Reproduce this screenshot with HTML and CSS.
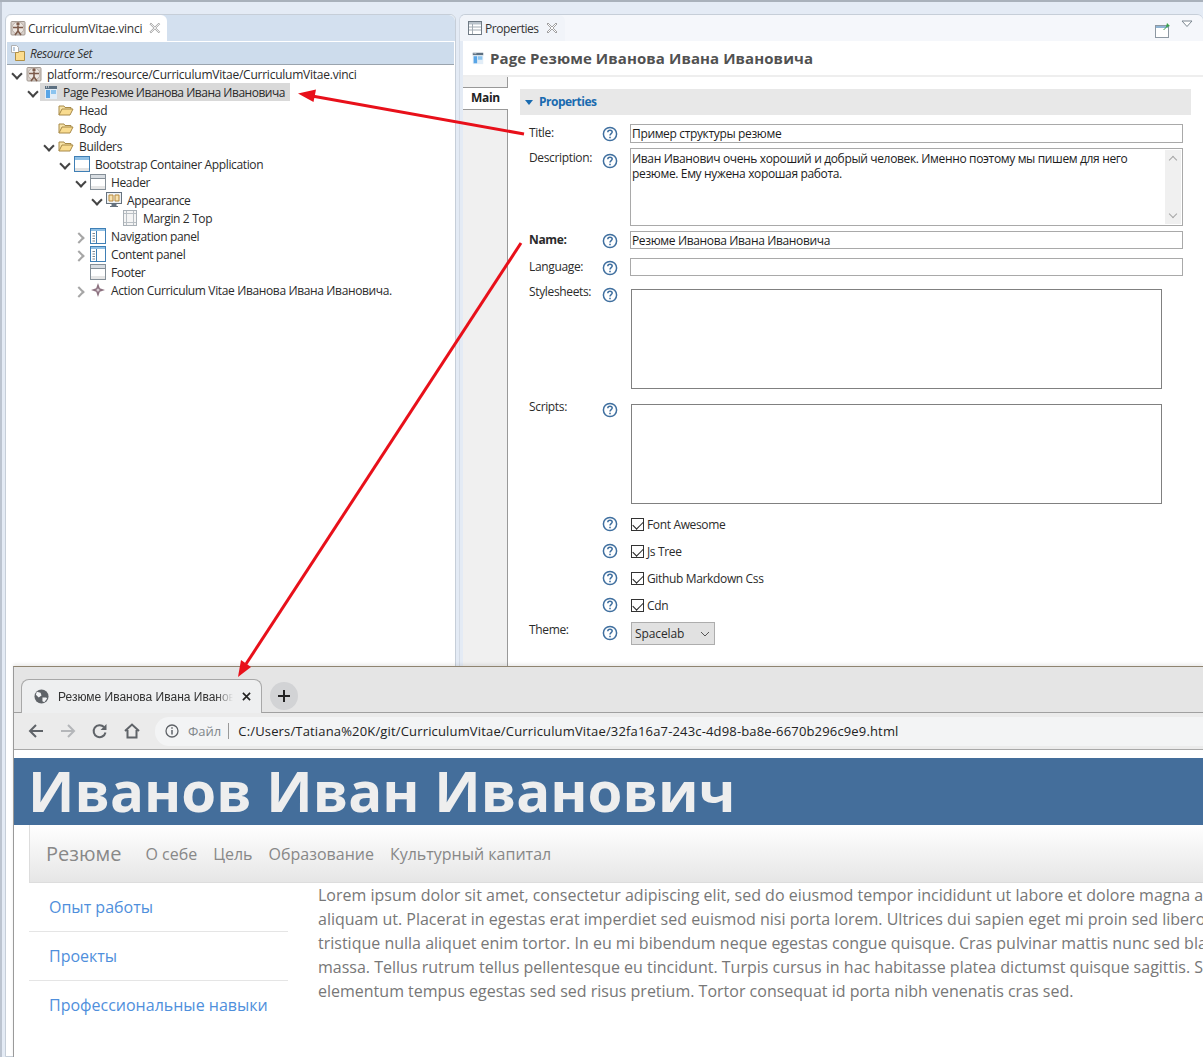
FILE: index.html
```html
<!doctype html>
<html>
<head>
<meta charset="utf-8" />
<title>Curriculum Vitae</title>
<link rel="stylesheet" href="styles.css">
</head>
<body>
<svg class="defs" width="0" height="0">
  <defs>
    <symbol id="i-vinci" viewBox="0 0 16 16">
      <rect x="1" y="1.500" width="14" height="13.500" rx="1" fill="#d8d0ca" stroke="#a39a93"/>
      <circle cx="8" cy="8" r="6" fill="#ece7e2" stroke="#b9aea6"/>
      <circle cx="8" cy="4" r="1.700" fill="#7c5a4a"/>
      <path d="M8 6v5M3 7.500h10M8 11l-3 4M8 11l3 4" stroke="#7c5a4a" stroke-width="1.600" fill="none"/>
    </symbol>
    <symbol id="i-folder" viewBox="0 0 16 16">
      <path d="M1 13V4h5l1 1.500h6V7" fill="#f8e4a8" stroke="#a88a48"/>
      <path d="M1 13l3-6h11l-3 6z" fill="#f9dc90" stroke="#a88a48"/>
    </symbol>
    <symbol id="i-set" viewBox="0 0 16 16">
      <path d="M1.500 .5h5l2 2v5h-7z" fill="#fff" stroke="#b0b0b0"/>
      <path d="M5.500 7.500h3l1-1h5v9h-9z" fill="#fbdc8e" stroke="#b08f44"/>
      <path d="M3 3h2M3 5h2" stroke="#7a9cc0"/>
    </symbol>
    <symbol id="i-page" viewBox="0 0 16 16">
      <path d="M2 2h12v3H2z" fill="#5c6f80"/>
      <path d="M2 5h12v10H2z" fill="#e2edf7"/>
      <path d="M3 6h4v8H3z" fill="#58a5e6"/>
      <path d="M8 6h5v4H8z" fill="#8cc4ef"/>
      <path d="M3 3h1M5 3h1" stroke="#fff"/>
    </symbol>
    <symbol id="i-app" viewBox="0 0 16 16">
      <rect x=".5" y=".5" width="15" height="15" fill="#fff" stroke="#3f7fb5"/>
      <path d="M1 1h14v3H1z" fill="#8fc0e6"/>
      <path d="M1 12h14v3H1z" fill="#e3e3e3"/>
    </symbol>
    <symbol id="i-header" viewBox="0 0 16 16">
      <rect x=".5" y=".5" width="15" height="15" fill="#fff" stroke="#858f98"/>
      <path d="M1 1h14v3H1z" fill="#d8dde2"/>
      <path d="M1 4.500h14" stroke="#858f98"/>
      <path d="M1 12h14v3H1z" fill="#e6e6e6"/>
    </symbol>
    <symbol id="i-look" viewBox="0 0 16 16">
      <rect x=".5" y=".5" width="15" height="11" fill="#eef1f4" stroke="#66727e"/>
      <path d="M3 3h4v6H3zM9 3h4v6H9z" fill="#f7e2b0" stroke="#b98a3c"/>
      <path d="M6 12h4v2H6zM4 14.500h8" fill="#66727e" stroke="#66727e"/>
    </symbol>
    <symbol id="i-margin" viewBox="0 0 16 16">
      <rect x="1.500" y=".5" width="13" height="15" fill="#f4f4f4" stroke="#a9b0b6"/>
      <path d="M4.500 1v14M11.500 1v14M2 3.500h12M2 12.500h12" stroke="#b9bfc4"/>
    </symbol>
    <symbol id="i-panel" viewBox="0 0 16 16">
      <rect x=".5" y=".5" width="15" height="15" fill="#fff" stroke="#3f7fb5"/>
      <path d="M1 1h14v2H1z" fill="#8fc0e6"/>
      <path d="M6.500 3v12" stroke="#3f7fb5"/>
      <path d="M2.500 5.500h2.500M2.500 8h2.500M2.500 10.500h2.500M2.500 13h2.500" stroke="#7d8790"/>
    </symbol>
    <symbol id="i-action" viewBox="0 0 16 16">
      <path d="M8 1l1.800 5.200L15 8l-5.200 1.800L8 15l-1.800-5.200L1 8l5.200-1.800z" fill="#8d7280"/>
      <circle cx="8" cy="8" r="1.500" fill="#d9ccd3"/>
    </symbol>
    <symbol id="i-help" viewBox="0 0 16 16">
      <circle cx="8" cy="8" r="6.600" fill="#fff" stroke="#3f6f9f" stroke-width="1.500"/>
      <path d="M5.800 6.200C5.800 4.800 6.800 4.200 8 4.200s2.200.7 2.200 1.900c0 1.500-2.200 1.600-2.200 3.300" fill="none" stroke="#3f6f9f" stroke-width="1.500"/>
      <path d="M7.200 10.800h1.600v1.500H7.200z" fill="#3f6f9f"/>
    </symbol>
    <symbol id="i-close" viewBox="0 0 12 12">
      <path d="M2 1l4 4 4-4 1 1-4 4 4 4-1 1-4-4-4 4-1-1 4-4-4-4z" fill="#fff" stroke="#8a8a8a" stroke-width=".8"/>
    </symbol>
  </defs>
</svg>

<div class="desktop">
  <!-- Редактор слева -->
  <section class="pane pane-left">
    <div class="tabstrip strip-blue">
      <div class="ptab ptab-left">
        <svg class="ico"><use href="#i-vinci"/></svg>
        <span class="tight">CurriculumVitae.vinci</span>
        <svg class="tab-x"><use href="#i-close"/></svg>
      </div>
    </div>
    <div class="resbar">
      <svg class="ico"><use href="#i-set"/></svg>
      <em>Resource Set</em>
    </div>
    <ul class="tree">
      <li class="row l0"><span class="tw open"></span><svg class="ico"><use href="#i-vinci"/></svg><span class="lbl">platform:/resource/CurriculumVitae/CurriculumVitae.vinci</span></li>
      <li class="row l1"><span class="tw open"></span><span class="sel"><svg class="ico"><use href="#i-page"/></svg><span class="lbl">Page Резюме Иванова Ивана Ивановича</span></span></li>
      <li class="row l2"><span class="tw"></span><svg class="ico"><use href="#i-folder"/></svg><span class="lbl">Head</span></li>
      <li class="row l2"><span class="tw"></span><svg class="ico"><use href="#i-folder"/></svg><span class="lbl">Body</span></li>
      <li class="row l2"><span class="tw open"></span><svg class="ico"><use href="#i-folder"/></svg><span class="lbl">Builders</span></li>
      <li class="row l3"><span class="tw open"></span><svg class="ico"><use href="#i-app"/></svg><span class="lbl">Bootstrap Container Application</span></li>
      <li class="row l4"><span class="tw open"></span><svg class="ico"><use href="#i-header"/></svg><span class="lbl">Header</span></li>
      <li class="row l5"><span class="tw open"></span><svg class="ico"><use href="#i-look"/></svg><span class="lbl">Appearance</span></li>
      <li class="row l6"><span class="tw"></span><svg class="ico"><use href="#i-margin"/></svg><span class="lbl">Margin 2 Top</span></li>
      <li class="row l4"><span class="tw shut"></span><svg class="ico"><use href="#i-panel"/></svg><span class="lbl">Navigation panel</span></li>
      <li class="row l4"><span class="tw shut"></span><svg class="ico"><use href="#i-panel"/></svg><span class="lbl">Content panel</span></li>
      <li class="row l4"><span class="tw"></span><svg class="ico"><use href="#i-header"/></svg><span class="lbl">Footer</span></li>
      <li class="row l4"><span class="tw shut"></span><svg class="ico"><use href="#i-action"/></svg><span class="lbl">Action Curriculum Vitae Иванова Ивана Ивановича.</span></li>
    </ul>
  </section>

  <!-- Свойства справа -->
  <section class="pane pane-right">
    <div class="tabstrip strip-light">
      <div class="ptab ptab-right">
        <svg class="ico" viewBox="0 0 16 16"><rect x="1.500" y="1.500" width="13" height="13" fill="#fff" stroke="#6f7a84"/><path d="M2 2h12v2.500H2z" fill="#b9c2ca"/><path d="M5.500 4v10M2 7h12M2 10h12" stroke="#a3acb4"/></svg>
        <span class="tight">Properties</span>
        <svg class="tab-x"><use href="#i-close"/></svg>
      </div>
      <div class="view-tools">
        <svg class="pin" viewBox="0 0 18 18"><rect x="1.500" y="4.500" width="13" height="12" fill="#fff" stroke="#8d98a2"/><path d="M2 5h12v2H2z" fill="#8fb4d4"/><path d="M9 9l3-3 1-4 3 3-3 1-3 3z" fill="#3aa14a"/></svg>
        <svg class="menu-arrow" viewBox="0 0 12 8"><path d="M1 1h10L6 6.500z" fill="#fff" stroke="#7c8791"/></svg>
      </div>
    </div>
    <h2 class="form-title"><svg class="ico"><use href="#i-page"/></svg>Page Резюме Иванова Ивана Ивановича</h2>
    <div class="prop-body">
      <div class="side-tabs"><div class="side-tab">Main</div></div>
      <div class="sheet">
        <div class="section-bar"><span class="twist"></span><span class="section-name">Properties</span></div>
        <div class="field h20 first">
          <label>Title:</label><svg class="help"><use href="#i-help"/></svg>
          <div class="input wide">Пример структуры резюме</div>
        </div>
        <div class="field h79">
          <label>Description:</label><svg class="help"><use href="#i-help"/></svg>
          <div class="input wide multi">Иван Иванович очень хороший и добрый человек. Именно поэтому мы пишем для него резюме. Ему нужена хорошая работа.
            <div class="vscroll"><i class="up"></i><i class="down"></i></div>
          </div>
        </div>
        <div class="field h19 g5">
          <label class="req">Name:</label><svg class="help"><use href="#i-help"/></svg>
          <div class="input wide">Резюме Иванова Ивана Ивановича</div>
        </div>
        <div class="field h19 g8">
          <label>Language:</label><svg class="help"><use href="#i-help"/></svg>
          <div class="input wide"></div>
        </div>
        <div class="field h100 g13">
          <label>Stylesheets:</label><svg class="help"><use href="#i-help"/></svg>
          <div class="listbox"></div>
        </div>
        <div class="field h100 g15">
          <label>Scripts:</label><svg class="help"><use href="#i-help"/></svg>
          <div class="listbox"></div>
        </div>
        <div class="field check g14"><label></label><svg class="help"><use href="#i-help"/></svg><span class="cb"></span>Font Awesome</div>
        <div class="field check"><label></label><svg class="help"><use href="#i-help"/></svg><span class="cb"></span>Js Tree</div>
        <div class="field check"><label></label><svg class="help"><use href="#i-help"/></svg><span class="cb"></span>Github Markdown Css</div>
        <div class="field check"><label></label><svg class="help"><use href="#i-help"/></svg><span class="cb"></span>Cdn</div>
        <div class="field theme">
          <label>Theme:</label><svg class="help"><use href="#i-help"/></svg>
          <div class="select">Spacelab<svg class="sel-arrow" viewBox="0 0 10 6"><path d="M1 1l4 4 4-4" fill="none" stroke="#555"/></svg></div>
        </div>
      </div>
    </div>
  </section>
</div>

<!-- Окно браузера поверх Eclipse -->
<div class="browser">
  <div class="chrome-tabs">
    <div class="ctab">
      <svg class="globe" viewBox="0 0 16 16"><circle cx="8" cy="8" r="7.500" fill="#5f6368"/><path d="M3 3l4 1 1 3-3 2-3-3zM9 9l4 0 1 1-3 4-2-1z" fill="#f2f3f5"/></svg>
      <span class="ctab-title">Резюме Иванова Ивана Иванов</span>
      <svg class="ctab-x" viewBox="0 0 10 10"><path d="M1 1l8 8M9 1l-8 8" stroke="#222" stroke-width="1.800"/></svg>
    </div>
    <div class="newtab"><svg viewBox="0 0 12 12"><path d="M6 0v12M0 6h12" stroke="#222" stroke-width="2"/></svg></div>
  </div>
  <div class="toolbar">
    <svg class="nav" viewBox="0 0 16 16"><path d="M15 8H2M8 2L2 8l6 6" fill="none" stroke="#5f6368" stroke-width="2"/></svg>
    <svg class="nav" viewBox="0 0 16 16"><path d="M1 8h13M8 2l6 6-6 6" fill="none" stroke="#b4b6b9" stroke-width="2"/></svg>
    <svg class="nav" viewBox="0 0 16 16"><path d="M13.500 9.500A6 6 0 1 1 12 4" fill="none" stroke="#5f6368" stroke-width="2"/><path d="M14.500 1v6h-6z" fill="#5f6368"/></svg>
    <svg class="nav" viewBox="0 0 16 16"><path d="M1 8l7-6.500L15 8M3.500 7v7.500h9V7" fill="none" stroke="#5f6368" stroke-width="2"/></svg>
    <div class="omnibox">
      <svg class="info" viewBox="0 0 14 14"><circle cx="7" cy="7" r="6" fill="none" stroke="#5f6368" stroke-width="1.300"/><path d="M7 6v4.500M7 3.300v1.500" stroke="#5f6368" stroke-width="1.500"/></svg>
      <span class="scheme">Файл</span>
      <span class="url">C:/Users/Tatiana%20K/git/CurriculumVitae/CurriculumVitae/32fa16a7-243c-4d98-ba8e-6670b296c9e9.html</span>
    </div>
  </div>
  <div class="viewport">
    <h1 class="jumbo">Иванов Иван Иванович</h1>
    <nav class="navbar">
      <a class="brand">Резюме</a>
      <a>О себе</a><a>Цель</a><a>Образование</a><a>Культурный капитал</a>
    </nav>
    <div class="content">
      <ul class="sidenav">
        <li>Опыт работы</li>
        <li>Проекты</li>
        <li>Профессиональные навыки</li>
      </ul>
      <p class="lorem">Lorem ipsum dolor sit amet, consectetur adipiscing elit, sed do eiusmod tempor incididunt ut labore et dolore magna a<br>aliquam ut. Placerat in egestas erat imperdiet sed euismod nisi porta lorem. Ultrices dui sapien eget mi proin sed libero<br>tristique nulla aliquet enim tortor. In eu mi bibendum neque egestas congue quisque. Cras pulvinar mattis nunc sed bla<br>massa. Tellus rutrum tellus pellentesque eu tincidunt. Turpis cursus in hac habitasse platea dictumst quisque sagittis. S<br>elementum tempus egestas sed sed risus pretium. Tortor consequat id porta nibh venenatis cras sed.</p>
    </div>
  </div>
</div>

<!-- Красные стрелки -->
<svg class="arrows" viewBox="0 0 1203 1057" width="1203" height="1057">
  <path d="M524 134L312 96" stroke="#e8101a" stroke-width="3" fill="none"/>
  <path d="M298 93.500L316 89.500L313.500 102z" fill="#e8101a"/>
  <path d="M521 243L246 664" stroke="#e8101a" stroke-width="3" fill="none"/>
  <path d="M238 677L241 660L251 667z" fill="#e8101a"/>
</svg>
</body>
</html>
```
FILE: styles.css
```css
* { box-sizing: border-box; }
html, body { margin: 0; height: 100%; }
body { width: 1203px; height: 1057px; overflow: hidden; position: relative; background: #e4ebf5; font: 12px "Open Sans", "Noto Sans", sans-serif; color: #222; border-top: 2px solid #a9b1bb; }
.defs { position: absolute; }
ul { list-style: none; margin: 0; padding: 0; }

/* Eclipse */
.desktop { display: flex; height: 1055px; padding: 12px 0 0 5px; gap: 3px; box-shadow: inset 2px 0 0 #bcc4d0; }
.pane { background: #fff; border: 1px solid #c6ced8; border-radius: 6px 6px 0 0; height: 100%; }
.pane-left { width: 451px; }
.pane-right { flex: 1; border-right: 0; border-left-color: #d4dbe5; background: #e4ebf5; }
.ico { width: 16px; height: 16px; flex: none; }
.tabstrip { height: 26px; display: flex; align-items: flex-end; border-radius: 6px 6px 0 0; }
.strip-blue { background: #d3e0ef; }
.strip-light { background: #f5f7fb; justify-content: space-between; }
.ptab { height: 26px; display: flex; align-items: center; background: #fff; border-radius: 6px 6px 0 0; padding: 0 6px 0 4px; color: #333; }
.ptab-left { width: 161px; }
.ptab-right { width: 105px; background: #f1f4f9; padding-left: 7px; }
.ptab .tight { margin-left: 2px; font-size: 12px; letter-spacing: -.2px; white-space: nowrap; }
.ptab-right .tight { letter-spacing: -.45px; }
.tab-x { width: 12px; height: 12px; margin-left: 7px; }
.view-tools { display: flex; align-items: center; height: 26px; gap: 9px; padding: 0 10px 0 0; }
.pin { width: 18px; height: 18px; margin-top: 3px; }
.menu-arrow { width: 12px; height: 8px; margin-top: -8px; }
.resbar { margin: 1px 1px 0; height: 23px; background: #cddcec; border-bottom: 1px solid #9aa4ae; display: flex; align-items: center; gap: 4px; padding-left: 3px; letter-spacing: -.4px; color: #333; }

.row { height: 18px; display: flex; align-items: center; white-space: nowrap; letter-spacing: -.36px; color: #2b2b2b; }
.lbl { margin-left: 5px; }
.l0 { padding-left: 3px; letter-spacing: -.24px; }
.l1 { padding-left: 19px; }
.l2 { padding-left: 35px; }
.l3 { padding-left: 51px; }
.l4 { padding-left: 67px; }
.l5 { padding-left: 83px; }
.l6 { padding-left: 99px; }
.tw { width: 16px; height: 18px; flex: none; margin-right: 1px; position: relative; }
.tw.open::after, .tw.shut::after { content: ""; position: absolute; left: 4px; top: 5px; width: 6px; height: 6px; border-right: 2px solid #444; border-bottom: 2px solid #444; transform: rotate(45deg); }
.tw.shut::after { border-color: #a6a6a6; left: 2px; top: 7px; transform: rotate(-45deg); }
.sel { display: flex; align-items: center; height: 18px; background: #d9d9d9; width: 250px; margin-left: -2px; padding-left: 3px; letter-spacing: -.48px; }
.sel .lbl { margin-left: 4px; }

.form-title { margin: 0 0 0 3px; height: 36px; display: flex; align-items: center; gap: 5px; padding-left: 8px; font-size: 15px; font-weight: 700; color: #515151; background: #fff; border-bottom: 2px solid #eeeeee; white-space: nowrap; letter-spacing: .08px; }
.form-title .ico { width: 14px; height: 14px; }
.prop-body { display: flex; height: 900px; margin-left: 3px; background: #fff; }
.side-tabs { width: 45px; padding-top: 10px; background: #f0f0f0; border-right: 1px solid #999; }
.side-tab { height: 23px; width: 45px; background: #fff; font-weight: 700; line-height: 19px; padding-left: 8px; border-top: 1px solid #999; border-bottom: 1px solid #999; color: #222; letter-spacing: -.3px; }
.sheet { flex: 1; padding: 12px 0 0 12px; }
.section-bar { width: 671px; height: 26px; background: #e8e8e8; color: #1a6bb0; font-weight: 700; display: flex; align-items: center; padding: 0 0 2px 5px; letter-spacing: -.5px; }
.twist { width: 0; height: 0; border-left: 4px solid transparent; border-right: 4px solid transparent; border-top: 5px solid #1a6bb0; margin-right: 6px; margin-top: 2px; }

.field { display: flex; align-items: flex-start; padding-left: 9px; letter-spacing: -.35px; color: #2b2b2b; }
.field label { width: 73px; flex: none; line-height: 18px; }
.field label.req { font-weight: 700; }
.help { width: 16px; height: 16px; flex: none; margin-right: 12px; margin-top: 2px; }
.h20 { height: 19px; }
.h79 { height: 78px; margin-top: 5px; }
.h79 label { padding-top: 1px; }
.h79 .help { margin-top: 5px; }
.h19 { height: 18px; }
.h100 { height: 100px; }
.h100 label { margin-top: -6px; }
.h100 .help { margin-top: -2px; }
.first { margin-top: 9px; }
.g5 { margin-top: 5px; }
.g8 { margin-top: 9px; }
.g13 { margin-top: 13px; }
.g15 { margin-top: 15px; }
.g14 { margin-top: 7px; }
.input { width: 553px; border: 1px solid #a9a9a9; height: 100%; line-height: 17px; padding-left: 1px; color: #1c1c1c; white-space: nowrap; background: #fff; }
.multi { white-space: normal; line-height: 15px; padding: 2px 40px 0 1px; position: relative; }
.vscroll { position: absolute; right: 1px; top: 1px; bottom: 1px; width: 16px; background: #f0f0f0; }
.vscroll i { position: absolute; left: 5px; width: 6px; height: 6px; border-left: 1px solid #a6a6a6; border-top: 1px solid #a6a6a6; }
.vscroll .up { top: 7px; transform: rotate(45deg); }
.vscroll .down { bottom: 7px; transform: rotate(225deg); }
.listbox { width: 531px; height: 100px; margin-left: 1px; border: 1px solid #808080; background: #fff; }
.check { height: 27px; align-items: center; }
.check .help { margin-top: 0; margin-bottom: 1px; }
.check label { height: 18px; }
.cb { width: 13px; height: 13px; border: 1px solid #333; margin: 0 3px 0 1px; position: relative; flex: none; }
.cb::after { content: ""; position: absolute; left: 3px; top: 0; width: 5px; height: 9px; border-right: 1px solid #222; border-bottom: 1px solid #222; transform: rotate(45deg); }
.theme { margin-top: 3px; height: 24px; }
.theme label { margin-top: -1px; }
.theme .help { margin-top: 3px; }
.select { width: 84px; height: 23px; margin-left: 1px; background: #e1e1e1; border: 1px solid #adadad; line-height: 21px; padding-left: 3px; display: flex; align-items: center; justify-content: space-between; padding-right: 4px; letter-spacing: -.1px; }
.sel-arrow { width: 10px; height: 6px; }

/* Браузер */
.browser { position: absolute; left: 13px; top: 664px; width: 1190px; height: 391px; border-top: 1px solid #8f8470; border-left: 1px solid #9a9a9a; background: #fff; box-shadow: 0 -2px 3px rgba(0,0,0,.08); overflow: hidden; font-family: "Open Sans", "Noto Sans", sans-serif; }
.chrome-tabs { height: 46px; background: #e5e5e5; display: flex; align-items: flex-end; padding-left: 7px; border-bottom: 1px solid #a0a0a0; }
.ctab { width: 241px; height: 34px; margin-bottom: -1px; background: #eeeff0; border: 1px solid #a8a8a8; border-bottom: 0; border-radius: 8px 8px 0 0; display: flex; align-items: center; padding-left: 12px; }
.globe { width: 15px; height: 15px; flex: none; }
.ctab-title { width: 175px; margin-left: 9px; font: 12px "Liberation Sans", sans-serif; color: #333; white-space: nowrap; overflow: hidden; -webkit-mask-image: linear-gradient(90deg, #000 90%, transparent); mask-image: linear-gradient(90deg, #000 90%, transparent); }
.ctab-x { width: 9px; height: 9px; margin-left: 9px; flex: none; }
.newtab { width: 28px; height: 28px; border-radius: 50%; background: #d2d3d5; margin: 0 0 2px 8px; display: flex; align-items: center; justify-content: center; }
.newtab svg { width: 12px; height: 12px; }
.toolbar { height: 37px; background: #ebebeb; display: flex; align-items: center; padding-left: 14px; gap: 16px; border-bottom: 1px solid #a8a8a8; }
.nav { width: 16px; height: 16px; flex: none; }
.omnibox { margin-left: -1px; flex: 1; height: 29px; background: #f3f4f5; border-radius: 14px 0 0 14px; display: flex; align-items: center; padding-left: 10px; white-space: nowrap; overflow: hidden; font: 13px "Open Sans", sans-serif; }
.info { width: 14px; height: 14px; flex: none; }
.scheme { margin-left: 9px; color: #80868b; padding-right: 7px; border-right: 1px solid #999; line-height: 16px; }
.url { margin-left: 9px; color: #222; letter-spacing: .16px; }
.viewport { padding-top: 8px; background: #fff; }
.jumbo { margin: 0; height: 67px; background: #446e9b; color: #eeeeee; font-size: 56.400px; line-height: 66px; font-weight: 700; padding-left: 14px; white-space: nowrap; }
.navbar { margin-left: 15px; height: 58px; display: flex; align-items: center; background: linear-gradient(#ffffff, #e6e6e6); border-left: 1px solid #ddd; border-bottom: 1px solid #ddd; padding-left: 16px; color: #888; font-size: 16px; white-space: nowrap; }
.navbar a { margin-right: 16px; }
.brand { font-size: 20px; margin-right: 24px !important; }
.content { display: flex; }
.sidenav { width: 259px; margin-left: 15px; flex: none; color: #4f8fdc; font-size: 16px; }
.sidenav li { height: 49px; line-height: 48px; padding-left: 20px; border-bottom: 1px solid #e5e5e5; white-space: nowrap; }
.sidenav li:last-child { border-bottom: 0; }
.lorem { margin: 0 0 0 30px; color: #777; font-size: 16px; line-height: 24px; white-space: nowrap; }

.arrows { position: absolute; left: 0; top: -2px; pointer-events: none; }
```
